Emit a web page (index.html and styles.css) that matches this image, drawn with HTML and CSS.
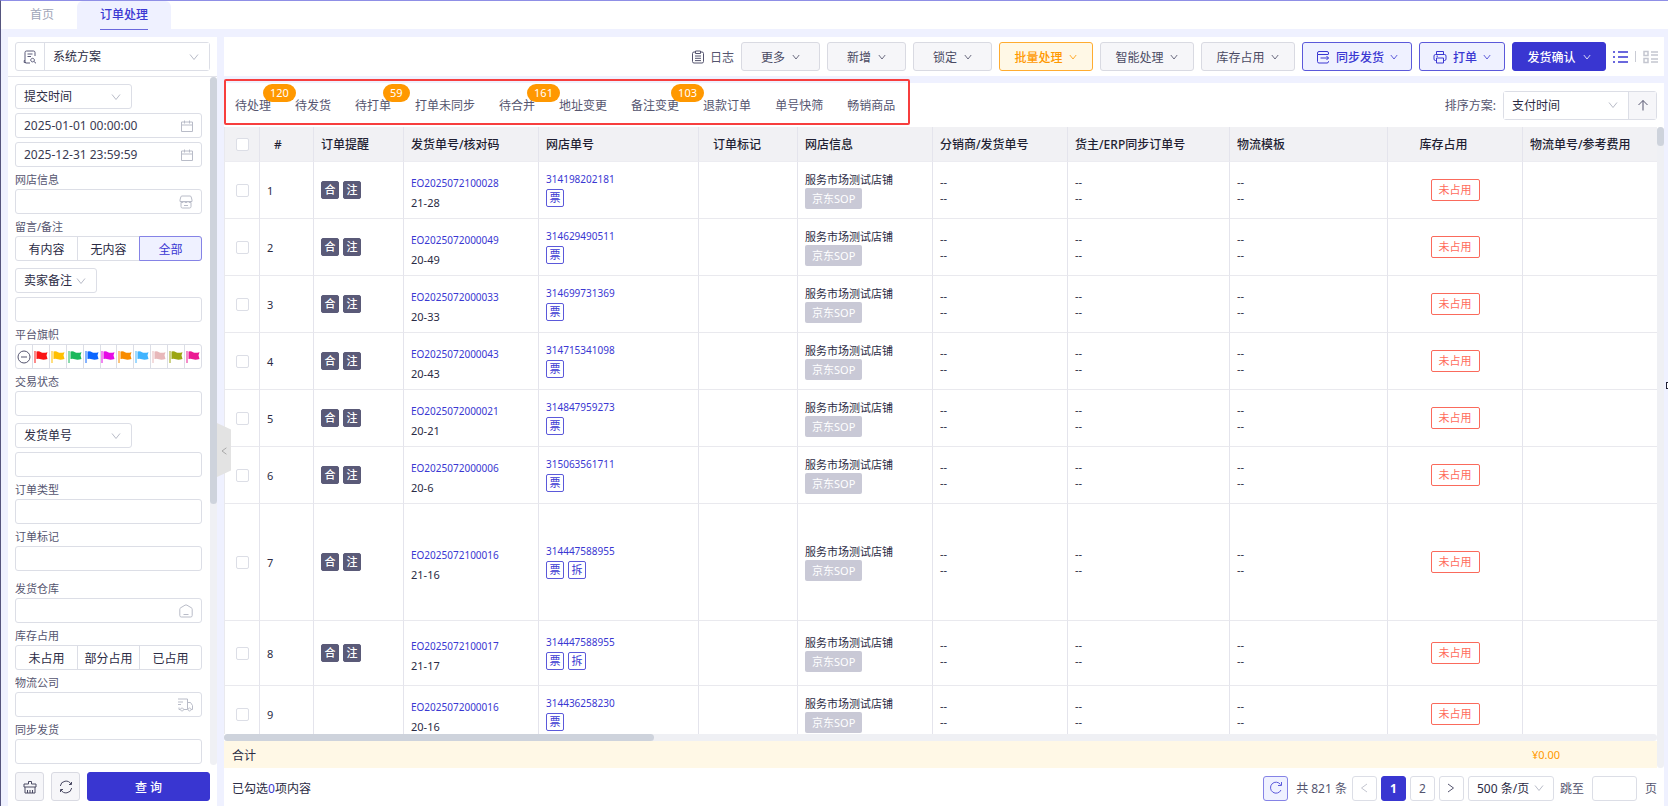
FILE: index.html
```html
<!DOCTYPE html>
<html lang="zh-CN">
<head>
    <meta charset="UTF-8">
    <meta name="viewport" content="width=device-width, initial-scale=1.0">
    <title>订单处理</title>
    <link rel="stylesheet" href="styles.css">
</head>
<body>

<!-- Shared icons -->
<svg class="sprite" aria-hidden="true">
    <symbol id="i-down" viewBox="0 0 10 10"><path d="M1 2.5l4 5 4-5"/></symbol>
    <symbol id="i-left" viewBox="0 0 10 10"><path d="M8 1L2.5 5 8 9"/></symbol>
    <symbol id="i-right" viewBox="0 0 10 10"><path d="M2 1l5.500 4L2 9"/></symbol>
    <symbol id="i-calendar" viewBox="0 0 12 12"><path d="M.5 2h11v9.500H.5zM.5 5h11M3.500 .5v3M8.500 .5v3"/></symbol>
    <symbol id="i-shop" viewBox="0 0 14 14"><path d="M3 1h8q1 0 1.200 1L13 5v1.500H1V5l.8-3Q2 1 3 1zM1 6.500q2 2.500 4 0 2 2.500 4 0 2 2.500 4 0M2 8v3.500Q2 13 3.500 13h7q1.500 0 1.500-1.500V8M5 10.500h4"/></symbol>
    <symbol id="i-house" viewBox="0 0 14 14"><path d="M.8 5.200Q.8 4.200 1.600 3.800L6 1.200q1-.6 2 0l4.400 2.600q.8.4.8 1.400v6.300q0 1.500-1.500 1.500H2.300Q.8 13 .8 11.500zM4.500 10.500h5"/></symbol>
    <symbol id="i-truck" viewBox="0 0 16 14"><path d="M1 1h9.500v10.500H7M3 11.500H2V9.500M1 4h5M1 6.500h3M10.500 4.500h3l2 3v4h-1.500M5 10a1.500 1.500 0 1 0 .1 0M12.500 10a1.500 1.500 0 1 0 .1 0"/></symbol>
    <symbol id="i-flag" viewBox="0 0 14 14"><path d="M1 1v12" stroke="currentColor"/><path d="M2.500 1.500Q5 .8 7 2.200q2 1 6.500 0l-1 3 1 3.800q-4 1.200-6.500.3-2-1-4.500-.3z" fill="currentColor" stroke="none"/></symbol>
</svg>

<!-- Page tabs -->
<nav class="page-tabs">
    <a href="#" class="page-tab">首页</a>
    <a href="#" class="page-tab active"><span>订单处理</span></a>
</nav>

<div class="layout">

    <!-- Filter sidebar -->
    <aside class="sidebar">
        <div class="plan">
            <div class="plan-box">
                <button type="button" class="plan-icon" aria-label="方案">
                    <svg width="14" height="14" viewBox="0 0 14 14"><path d="M12 6V2.500Q12 1 10.500 1h-7Q2 1 2 2.500V12q0 1 1 1h4M2 10.500h-.8V12.500H3M4.500 4h5M4.500 6.500h3.500M9.500 8.300a1.800 1.800 0 1 0 .1 0M11 11.500l2 1.800"/></svg>
                </button>
                <div class="select grow">
                    <select aria-label="查询方案"><option>系统方案</option></select>
                    <svg class="arrow" width="10" height="10"><use href="#i-down"/></svg>
                </div>
            </div>
        </div>

        <div class="filters">
            <form class="filter-form">
                <div class="select box medium">
                    <select aria-label="时间类型"><option>提交时间</option></select>
                    <svg class="arrow" width="10" height="10"><use href="#i-down"/></svg>
                </div>
                <div class="field gap">
                    <input type="text" aria-label="开始时间" value="2025-01-01 00:00:00">
                    <svg width="12" height="12"><use href="#i-calendar"/></svg>
                </div>
                <div class="field gap">
                    <input type="text" aria-label="结束时间" value="2025-12-31 23:59:59">
                    <svg width="12" height="12"><use href="#i-calendar"/></svg>
                </div>

                <label for="shop">网店信息</label>
                <div class="field">
                    <input type="text" id="shop">
                    <svg width="14" height="14"><use href="#i-shop"/></svg>
                </div>

                <div class="label">留言/备注</div>
                <div class="segment">
                    <button type="button">有内容</button>
                    <button type="button">无内容</button>
                    <button type="button" class="active">全部</button>
                </div>

                <div class="select box small space">
                    <select aria-label="备注类型"><option>卖家备注</option></select>
                    <svg class="arrow" width="10" height="10"><use href="#i-down"/></svg>
                </div>
                <div class="field gap"><input type="text" aria-label="备注内容"></div>

                <div class="label">平台旗帜</div>
                <div class="flags" id="flags">
                    <button type="button" class="no-flag" aria-label="无旗帜">
                        <svg width="14" height="14" viewBox="0 0 14 14"><circle cx="7" cy="7" r="6"/><path d="M4 7h6"/></svg>
                    </button>
                </div>

                <label for="trade">交易状态</label>
                <div class="field"><input type="text" id="trade"></div>

                <div class="select box medium space">
                    <select aria-label="单号类型"><option>发货单号</option></select>
                    <svg class="arrow" width="10" height="10"><use href="#i-down"/></svg>
                </div>
                <div class="field gap"><input type="text" aria-label="单号"></div>

                <label for="type">订单类型</label>
                <div class="field"><input type="text" id="type"></div>

                <label for="mark">订单标记</label>
                <div class="field"><input type="text" id="mark"></div>

                <label for="warehouse" class="section">发货仓库</label>
                <div class="field">
                    <input type="text" id="warehouse">
                    <svg width="14" height="14"><use href="#i-house"/></svg>
                </div>

                <div class="label">库存占用</div>
                <div class="segment">
                    <button type="button">未占用</button>
                    <button type="button">部分占用</button>
                    <button type="button">已占用</button>
                </div>

                <label for="express">物流公司</label>
                <div class="field">
                    <input type="text" id="express">
                    <svg width="16" height="14"><use href="#i-truck"/></svg>
                </div>

                <label for="sync">同步发货</label>
                <div class="field"><input type="text" id="sync"></div>
            </form>
            <div class="scroll-y"><div class="thumb"></div></div>
        </div>

        <div class="filter-actions">
            <button type="button" class="btn square" aria-label="清空">
                <svg width="14" height="14" viewBox="0 0 14 14"><path d="M5.500 4V1.500h3V4H13v3H1V4zM2 7v6h10V7M4.500 13v-3M7 13v-3M9.500 13v-3"/></svg>
            </button>
            <button type="button" class="btn square" aria-label="重置">
                <svg width="14" height="14" viewBox="0 0 14 14"><path d="M1.300 6A5.700 5.700 0 0 1 12 4.200M12.700 8A5.700 5.700 0 0 1 2 9.800M12.500 2v2.500H10M1.500 12V9.500H4"/></svg>
            </button>
            <button type="button" class="btn primary grow">查 询</button>
        </div>

        <button type="button" class="collapse" aria-label="收起">
            <svg width="8" height="8"><use href="#i-left"/></svg>
        </button>
    </aside>

    <main class="main">

        <!-- Toolbar -->
        <div class="toolbar">
            <a href="#" class="log">
                <svg width="14" height="14" viewBox="0 0 14 14"><path d="M4.500 2H3Q1.500 2 1.500 3.500v8Q1.500 13 3 13h8q1.500 0 1.500-1.500v-8Q12.500 2 11 2H9.500M4.500 1h5v2.500h-5zM4 6h6M4 8.300h6M4 10.600h6"/></svg>
                日志
            </a>
            <button type="button" class="btn w2">更多 <svg width="8" height="8"><use href="#i-down"/></svg></button>
            <button type="button" class="btn w2">新增 <svg width="8" height="8"><use href="#i-down"/></svg></button>
            <button type="button" class="btn w2">锁定 <svg width="8" height="8"><use href="#i-down"/></svg></button>
            <button type="button" class="btn w4 warning">批量处理 <svg width="8" height="8"><use href="#i-down"/></svg></button>
            <button type="button" class="btn w4">智能处理 <svg width="8" height="8"><use href="#i-down"/></svg></button>
            <button type="button" class="btn w4">库存占用 <svg width="8" height="8"><use href="#i-down"/></svg></button>
            <button type="button" class="btn outline">
                <svg width="14" height="14" viewBox="0 0 14 14"><path d="M12.500 4V3q0-1.500-1.500-1.500H3Q1.500 1.500 1.500 3v1.500h11M1.500 4.500v7Q1.500 13 3 13h8q1.500 0 1.500-1.500v-.5M4.500 8h8M10.500 6l2 2-2 2"/></svg>
                同步发货 <svg width="8" height="8"><use href="#i-down"/></svg>
            </button>
            <button type="button" class="btn outline">
                <svg width="14" height="14" viewBox="0 0 14 14"><path d="M3.500 4.500v-3h7v3M3.500 10.500H2.500Q1 10.500 1 9V6q0-1.500 1.500-1.500h9Q13 4.500 13 6v3q0 1.500-1.500 1.500h-1M3.500 8h7v5h-7zM3.500 6.200H5"/></svg>
                打单 <svg width="8" height="8"><use href="#i-down"/></svg>
            </button>
            <button type="button" class="btn w4 primary">发货确认 <svg width="8" height="8"><use href="#i-down"/></svg></button>
            <div class="views">
                <button type="button" class="active" aria-label="列表">
                    <svg width="15" height="14" viewBox="0 0 15 14"><path d="M5 2h10M5 7h10M5 12h10M0 2h2M0 7h2M0 12h2"/></svg>
                </button>
                <i></i>
                <button type="button" aria-label="卡片">
                    <svg width="15" height="14" viewBox="0 0 15 14"><path d="M1 1.500h4v4H1zM1 8.500h4v4H1zM8 2h7M8 5h7M8 9h7M8 12h7"/></svg>
                </button>
            </div>
        </div>

        <div class="panel">

            <!-- Status tabs and sorting -->
            <div class="status-bar">
                <nav class="status-tabs">
                    <a href="#">待处理<span class="count">120</span></a>
                    <a href="#">待发货</a>
                    <a href="#">待打单<span class="count">59</span></a>
                    <a href="#">打单未同步</a>
                    <a href="#">待合并<span class="count">161</span></a>
                    <a href="#">地址变更</a>
                    <a href="#">备注变更<span class="count">103</span></a>
                    <a href="#">退款订单</a>
                    <a href="#">单号快筛</a>
                    <a href="#">畅销商品</a>
                </nav>
                <div class="sort">
                    <label for="sort">排序方案:</label>
                    <div class="sort-box">
                        <div class="select grow">
                            <select id="sort"><option>支付时间</option></select>
                            <svg class="arrow" width="10" height="10"><use href="#i-down"/></svg>
                        </div>
                        <button type="button" aria-label="升序">
                            <svg width="12" height="12" viewBox="0 0 12 12"><path d="M6 11.500V1.500M1.500 6L6 1.500 10.500 6"/></svg>
                        </button>
                    </div>
                </div>
            </div>

            <!-- Orders -->
            <div class="grid">
                <div class="grid-content">
                    <div class="table-wrap">
                        <table>
                            <colgroup>
                                <col class="c-check"><col class="c-num"><col class="c-tip"><col class="c-std"><col class="c-shop-no"><col class="c-mark">
                                <col class="c-std"><col class="c-std"><col class="c-erp"><col class="c-tpl"><col class="c-std"><col>
                            </colgroup>
                            <thead>
                                <tr>
                                    <th><input type="checkbox" aria-label="全选"></th>
                                    <th class="indent">#</th>
                                    <th>订单提醒</th>
                                    <th>发货单号/核对码</th>
                                    <th>网店单号</th>
                                    <th class="indent">订单标记</th>
                                    <th>网店信息</th>
                                    <th>分销商/发货单号</th>
                                    <th>货主/ERP同步订单号</th>
                                    <th>物流模板</th>
                                    <th class="stock-head">库存占用</th>
                                    <th>物流单号/参考费用</th>
                                </tr>
                            </thead>
                            <tbody id="orders"></tbody>
                        </table>
                    </div>
                    <div class="scroll-x"><div class="thumb"></div></div>
                    <div class="total">
                        <span>合计</span>
                        <span class="amount">¥0.00</span>
                    </div>
                </div>
                <div class="scroll-y"><div class="thumb"></div></div>
            </div>

            <!-- Pagination -->
            <div class="footer">
                <div class="selected">已勾选<b>0</b>项内容</div>
                <div class="pager">
                    <button type="button" class="reload" aria-label="刷新">
                        <svg width="14" height="14" viewBox="0 0 14 14"><path d="M12 9A5.500 5.500 0 1 1 11.500 3.500M12.500 1v3.500H9"/></svg>
                    </button>
                    <span class="pager-total">共 821 条</span>
                    <button type="button" class="muted" aria-label="上一页"><svg width="10" height="10"><use href="#i-left"/></svg></button>
                    <button type="button" class="active">1</button>
                    <button type="button">2</button>
                    <button type="button" aria-label="下一页"><svg width="10" height="10"><use href="#i-right"/></svg></button>
                    <div class="select box page-size">
                        <select aria-label="每页条数"><option>500 条/页</option></select>
                        <svg class="arrow" width="10" height="10"><use href="#i-down"/></svg>
                    </div>
                    <label for="jump">跳至</label>
                    <input type="text" id="jump">
                    <span>页</span>
                </div>
            </div>
        </div>
    </main>
</div>

<span class="edge-mark"></span>

<script>
    const flagColors = ['#fa1414', '#ffbf00', '#1bb85c', '#0b66ff', '#e60be6', '#f88b00', '#40b4ff', '#e8b8ba', '#9ca613', '#eb1b92'];

    const orders = [
        { no: 'EO2025072100028', code: '21-28', shopNo: '314198202181', tips: ['合', '注'], tags: ['票'] },
        { no: 'EO2025072000049', code: '20-49', shopNo: '314629490511', tips: ['合', '注'], tags: ['票'] },
        { no: 'EO2025072000033', code: '20-33', shopNo: '314699731369', tips: ['合', '注'], tags: ['票'] },
        { no: 'EO2025072000043', code: '20-43', shopNo: '314715341098', tips: ['合', '注'], tags: ['票'] },
        { no: 'EO2025072000021', code: '20-21', shopNo: '314847959273', tips: ['合', '注'], tags: ['票'] },
        { no: 'EO2025072000006', code: '20-6', shopNo: '315063561711', tips: ['合', '注'], tags: ['票'] },
        { no: 'EO2025072100016', code: '21-16', shopNo: '314447588955', tips: ['合', '注'], tags: ['票', '拆'], size: 'tall' },
        { no: 'EO2025072100017', code: '21-17', shopNo: '314447588955', tips: ['合', '注'], tags: ['票', '拆'], size: 'mid' },
        { no: 'EO2025072000016', code: '20-16', shopNo: '314436258230', tips: [], tags: ['票'] }
    ];

    // Flag filter buttons
    flagColors.forEach((color, i) => {
        document.getElementById('flags').insertAdjacentHTML('beforeend',
            `<button type="button" aria-label="旗帜${i + 1}" style="color: ${color}"><svg width="14" height="14"><use href="#i-flag"/></svg></button>`);
    });

    // Order rows
    const empty = '<td class="dashes">--<br>--</td>';
    document.getElementById('orders').innerHTML = orders.map((o, i) => `
        <tr class="${o.size || ''}">
            <td><input type="checkbox" aria-label="选择${i + 1}"></td>
            <td>${i + 1}</td>
            <td><div class="tags">${o.tips.map(t => `<span class="tag dark">${t}</span>`).join('')}</div></td>
            <td class="order-no"><a href="#">${o.no}</a><span>${o.code}</span></td>
            <td class="shop-no"><a href="#">${o.shopNo}</a><div class="tags">${o.tags.map(t => `<span class="tag">${t}</span>`).join('')}</div></td>
            <td></td>
            <td class="shop"><div>服务市场测试店铺</div><span class="platform">京东SOP</span></td>
            ${empty}${empty}${empty}
            <td class="stock"><span>未占用</span></td>
            <td></td>
        </tr>`).join('');
</script>

</body>
</html>
```

FILE: styles.css
```css
* {
    margin: 0;
    padding: 0;
    box-sizing: border-box;
}

body {
    height: 100vh;
    display: flex;
    flex-direction: column;
    overflow: hidden;
    font-family: "Noto Sans", "Noto Sans CJK SC", sans-serif;
    font-size: 12px;
    color: #2b2b44;
    background-color: #eff1ff;
    border-top: 1px solid #8f8fe6;
    border-left: 1px solid #55557e;
}

button, input, select {
    font: inherit;
    color: inherit;
}

button {
    cursor: pointer;
}

a {
    color: inherit;
    text-decoration: none;
}

svg {
    flex: none;
    fill: none;
    stroke: currentColor;
    stroke-width: 1;
}

.sprite {
    position: absolute;
    width: 0;
    height: 0;
}

.grow {
    flex: 1;
}

/* Page tabs */
.page-tabs {
    display: flex;
    height: 28px;
    background-color: #fff;
}

.page-tab {
    width: 76px;
    padding-left: 6px;
    text-align: center;
    line-height: 28px;
    color: #a0a5b8;
}

.page-tab.active {
    width: 94px;
    padding: 0;
    color: #3a37d2;
    font-weight: 500;
    background-color: #eff1ff;
    border-radius: 6px 6px 0 0;
}

.page-tab.active span {
    display: inline-block;
    border-bottom: 1px solid #6a68dd;
}

.layout {
    flex: 1;
    min-height: 0;
    display: flex;
    gap: 7px;
    padding: 8px 4px 0 7px;
}

/* Sidebar */
.sidebar {
    position: relative;
    width: 209px;
    flex: none;
    display: flex;
    flex-direction: column;
    background-color: #fff;
}

.plan {
    padding: 5px 7px;
    border-bottom: 1px solid #e2e3ea;
}

.plan-box, .sort-box {
    display: flex;
    height: 29px;
    border: 1px solid #dcdee6;
    border-radius: 3px;
}

.plan-icon {
    width: 29px;
    display: flex;
    align-items: center;
    justify-content: center;
    background: none;
    border: none;
    border-right: 1px solid #dcdee6;
    color: #5a5a78;
}

.select {
    position: relative;
    display: flex;
    background-color: #fff;
}

.select select {
    width: 100%;
    padding: 0 8px;
    appearance: none;
    background: none;
    border: none;
}

.select .arrow {
    position: absolute;
    right: 10px;
    top: 50%;
    margin-top: -5px;
    color: #b9bcc8;
    pointer-events: none;
}

.box {
    height: 25px;
    border: 1px solid #dcdee6;
    border-radius: 3px;
}

.medium {
    width: 117px;
}

.small {
    width: 82px;
}

.filters {
    flex: 1;
    min-height: 0;
    display: flex;
    overflow: hidden;
}

.filter-form {
    flex: 1;
    min-width: 0;
    padding: 7px 8px 0 7px;
}

.filter-form label, .label {
    display: block;
    height: 22px;
    line-height: 26px;
    font-size: 11px;
    color: #55556f;
}

.filter-form .section {
    margin-top: 5px;
}

.gap {
    margin-top: 4px;
}

.space {
    margin-top: 7px;
}

.field {
    display: flex;
    align-items: center;
    height: 25px;
    padding: 0 8px;
    border: 1px solid #dcdee6;
    border-radius: 3px;
    color: #b9bcc8;
}

.field input {
    flex: 1;
    min-width: 0;
    border: none;
    outline: none;
    background: none;
    color: #3a3a52;
}

.segment, .flags {
    display: flex;
    height: 25px;
    border: 1px solid #dcdee6;
    border-radius: 3px;
}

.segment button {
    flex: 1 1 0;
    background: none;
    border: none;
    border-right: 1px solid #dcdee6;
    white-space: nowrap;
}

.segment button:last-child, .flags button:last-child {
    border-right: none;
}

.segment .active {
    margin: -1px;
    color: #3a37d2;
    background-color: #eff1ff;
    border: 1px solid #8583e6;
    border-radius: 0 3px 3px 0;
}

.segment .active:last-child {
    border-right: 1px solid #8583e6;
}

.flags button {
    flex: 1 1 0;
    min-width: 0;
    display: flex;
    align-items: center;
    justify-content: center;
    background: none;
    border: none;
    border-right: 1px solid #dcdee6;
}

.flags .no-flag {
    color: #55556f;
}

.filter-actions {
    display: flex;
    gap: 7px;
    padding: 7px 7px 5px;
}

/* Collapse handle over the gutter */
.collapse {
    position: absolute;
    left: 100%;
    top: 386px;
    z-index: 2;
    width: 14px;
    height: 54px;
    border: none;
    background-color: #e3e3e3;
    color: #9a9a9a;
    clip-path: polygon(0 0, 100% 12%, 100% 88%, 0 100%);
}

/* Scrollbars */
.scroll-y {
    width: 7px;
    background-color: #eff0f4;
    border-radius: 4px;
}

.scroll-x {
    height: 7px;
    background-color: #eff0f4;
    border-radius: 4px;
}

.thumb {
    background-color: #ced3dc;
    border-radius: 4px;
}

.filters .thumb {
    height: 62%;
}

.grid > .scroll-y .thumb {
    height: 19px;
}

.scroll-x .thumb {
    width: 30%;
    height: 7px;
}

/* Buttons */
.btn {
    display: flex;
    align-items: center;
    justify-content: center;
    gap: 7px;
    height: 29px;
    padding: 0 14px;
    color: #4a4a63;
    background-color: #f6f6f9;
    border: 1px solid #d9dae2;
    border-radius: 3px;
}

.w2 {
    width: 79px;
}

.w4 {
    width: 94px;
}

.square {
    width: 29px;
    padding: 0;
}

.primary {
    color: #fff;
    font-weight: 500;
    background-color: #3936d1;
    border-color: #3936d1;
}

.outline {
    gap: 6px;
    padding: 0 13px;
    color: #3a37d2;
    font-weight: 500;
    background-color: #eff1ff;
    border-color: #5b59da;
}

.warning {
    color: #ff9800;
    font-weight: 500;
    background-color: #fff8e6;
    border-color: #ffac30;
}

/* Main */
.main {
    flex: 1;
    min-width: 0;
    display: flex;
    flex-direction: column;
    gap: 7px;
}

.toolbar {
    display: flex;
    align-items: center;
    justify-content: flex-end;
    gap: 7px;
    height: 39px;
    padding: 0 6px;
    background-color: #fff;
}

.log {
    display: flex;
    align-items: center;
    gap: 5px;
    color: #55556f;
}

.views {
    display: flex;
    align-items: center;
    gap: 7px;
}

.views button {
    display: flex;
    background: none;
    border: none;
    color: #c4c6d0;
}

.views svg {
    stroke-width: 1.5;
}

.views .active {
    color: #3a37d2;
}

.views i {
    width: 1px;
    height: 11px;
    background-color: #c9cbd4;
}

.panel {
    flex: 1;
    min-height: 0;
    display: flex;
    flex-direction: column;
    background-color: #fff;
}

.status-bar {
    display: flex;
    justify-content: space-between;
    align-items: center;
    height: 44px;
    padding-right: 7px;
}

.status-tabs {
    position: relative;
    display: flex;
    align-items: center;
    gap: 24px;
    height: 44px;
    padding: 0 15px 0 11px;
    color: #55556f;
}

/* Highlight frame round the tabs */
.status-tabs::after {
    content: "";
    position: absolute;
    inset: -4px 0 2px;
    border: 2px solid #f73e3e;
    border-radius: 2px;
    pointer-events: none;
}

.status-tabs a {
    position: relative;
}

.count {
    position: absolute;
    left: calc(100% - 8px);
    top: -12px;
    z-index: 1;
    height: 18px;
    padding: 0 7px;
    line-height: 18px;
    font-size: 11px;
    color: #fff;
    background-color: #ff9800;
    border-radius: 9px;
}

.sort {
    display: flex;
    align-items: center;
    gap: 7px;
    color: #55556f;
}

.sort-box {
    width: 154px;
}

.sort-box select {
    color: #2b2b44;
}

.sort-box button {
    width: 28px;
    display: flex;
    align-items: center;
    justify-content: center;
    background-color: #f6f6f9;
    border: none;
    border-left: 1px solid #dcdee6;
}

/* Orders table */
.grid {
    flex: 1;
    min-height: 0;
    display: flex;
}

.grid-content {
    flex: 1;
    min-width: 0;
    display: flex;
    flex-direction: column;
}

.table-wrap {
    flex: 1;
    min-height: 0;
    overflow: hidden;
}

table {
    width: 100%;
    table-layout: fixed;
    border-collapse: separate;
    border-spacing: 0;
}

.c-check { width: 36px; }
.c-num { width: 54px; }
.c-tip { width: 90px; }
.c-std { width: 135px; }
.c-shop-no { width: 160px; }
.c-mark { width: 99px; }
.c-erp { width: 162px; }
.c-tpl { width: 158px; }

th {
    height: 35px;
    padding: 0 7px;
    font-weight: 500;
    text-align: left;
    color: #1f1f33;
    background-color: #f1f1f4;
    border-right: 1px solid #e4e4ec;
    border-bottom: 1px solid #ececf1;
    white-space: nowrap;
}

th.indent {
    padding-left: 14px;
}

th.stock-head {
    padding-right: 30px;
    text-align: center;
}

td {
    height: 57px;
    padding: 0 7px;
    font-size: 11px;
    border-right: 1px solid #e4e4ec;
    border-bottom: 1px solid #e9e9ee;
    vertical-align: middle;
}

th:first-child, td:first-child {
    padding: 0 11px;
    border-left: 1px solid #e9e9ee;
}

th:last-child, td:last-child {
    border-right: none;
}

.tall td {
    height: 117px;
}

.mid td {
    height: 65px;
}

input[type="checkbox"] {
    display: block;
    width: 13px;
    height: 13px;
    appearance: none;
    background-color: #fff;
    border: 1px solid #dcdee6;
    border-radius: 2px;
}

td a {
    display: block;
    color: #3a37d2;
    font-size: 10px;
}

td.order-no {
    padding-top: 5px;
    line-height: 20px;
}

.order-no span {
    display: block;
}

td.shop-no {
    padding-bottom: 5px;
}

.shop-no a {
    line-height: 20px;
}

.tags {
    display: flex;
    gap: 4px;
}

.tag {
    width: 18px;
    height: 18px;
    line-height: 16px;
    text-align: center;
    color: #3a37d2;
    border: 1px solid #5b59da;
    border-radius: 2px;
}

.tag.dark {
    color: #fff;
    font-weight: 500;
    background-color: #5a5a78;
    border-color: #5a5a78;
}

.shop {
    line-height: 16px;
}

.platform {
    display: inline-block;
    height: 21px;
    padding: 0 7px;
    line-height: 21px;
    color: #fff;
    background-color: #c9c9d6;
    border-radius: 2px;
}

.dashes {
    line-height: 16px;
}

.stock {
    text-align: center;
}

.stock span {
    display: inline-block;
    height: 22px;
    padding: 0 7px;
    line-height: 20px;
    color: #ff6b5c;
    border: 1px solid #fa6a5c;
    border-radius: 2px;
}

.total {
    display: flex;
    justify-content: space-between;
    align-items: center;
    height: 27px;
    padding: 0 97px 0 8px;
    background-color: #fff8e6;
}

.amount {
    color: #ff9800;
    font-size: 11px;
}

/* Footer */
.footer {
    display: flex;
    justify-content: space-between;
    align-items: center;
    height: 38px;
    padding: 2px 7px 0 8px;
}

.selected b {
    color: #3a37d2;
    font-weight: 400;
}

.pager {
    display: flex;
    align-items: center;
    gap: 4px;
    color: #55556f;
}

.pager button, .pager input {
    width: 25px;
    height: 25px;
    display: flex;
    align-items: center;
    justify-content: center;
    background-color: #fff;
    border: 1px solid #dcdee6;
    border-radius: 3px;
}

.pager .reload {
    color: #5b59da;
    background-color: #eff1ff;
    border-color: #8583e6;
}

.pager .active {
    color: #fff;
    font-weight: 700;
    background-color: #3936d1;
    border-color: #3936d1;
}

.pager .muted {
    color: #c4c6d0;
}

.pager .pager-total {
    padding: 0 1px 0 4px;
}

.page-size {
    width: 86px;
    color: #2b2b44;
}

.page-size .arrow {
    right: 9px;
}

.pager label {
    padding: 0 4px 0 2px;
}

.pager input {
    width: 45px;
    margin-right: 4px;
}

/* Small handle on the window edge */
.edge-mark {
    position: absolute;
    right: 0;
    top: 382px;
    width: 2px;
    height: 7px;
    background-color: #fff;
    border: 1px solid #1f1f33;
    border-right: none;
}
```
